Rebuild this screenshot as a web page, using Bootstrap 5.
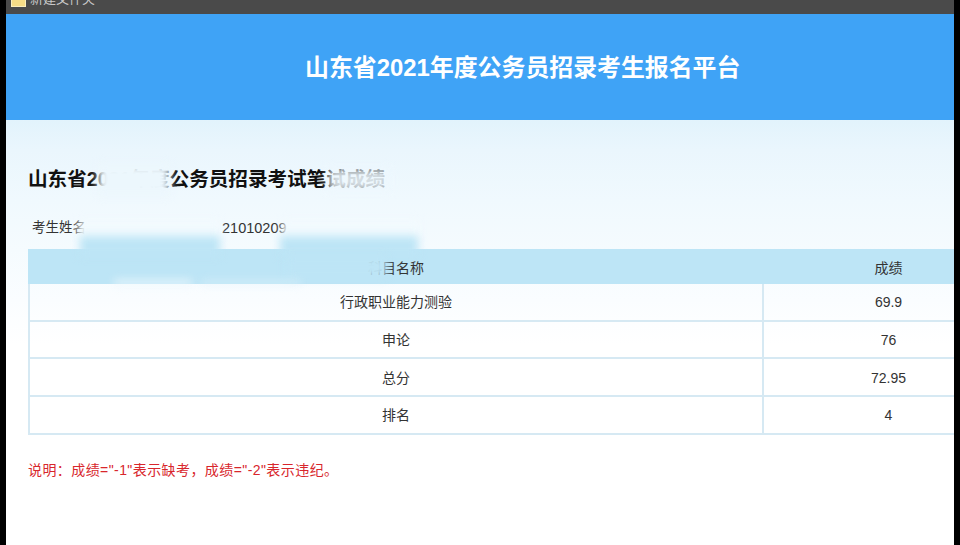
<!DOCTYPE html>
<html lang="zh">
<head>
<meta charset="utf-8">
<title>山东省2021年度公务员招录考生报名平台</title>
<link href="https://cdn.jsdelivr.net/npm/bootstrap@5.3.0/dist/css/bootstrap.min.css" rel="stylesheet">
<style>
html, body { height: 100%; }
body { background: #000; font-family: "Liberation Sans", "Noto Sans CJK SC", sans-serif; color: #333; font-size: 14px; }
.frame { margin: 0 6px; height: 545px; background: #fff; overflow: hidden; position: relative; }
.tabbar { height: 14px; background: #4a4a4a; color: #c9c9c9; font-size: 13px; line-height: 18px; overflow: hidden; padding-left: 5px; }
.tabinner { margin-top: -10px; gap: 4px; }
.foldericon { width: 15px; height: 15px; background: #f6dc86; margin-top: 2px; flex: none; border: 1px solid #fbeebc; }
.banner { height: 106px; background: #3fa3f6; color: #fff; font-size: 23.9px; font-weight: 700; padding-left: 299px; line-height: 108px; }
.bodyzone { height: 320px; padding: 44px 0 0 22px; background: linear-gradient(#e2f3fc 0, #eaf6fd 30px, #f0f9fe 80px, #f5fbfe 130px, #fafdff 180px, #fff 225px); position: relative; }
.exam-title { font-size: 19.6px; font-weight: 700; color: #111; margin: 0; line-height: 30px; white-space: nowrap; }
.inforow { margin-top: 24px; height: 31px; padding-left: 4px; font-size: 13.5px; line-height: 20px; }
.infoname { width: 190px; }
.infonum { font-size: 14.5px; }
.scoretable { width: 987px; max-width: none; margin: 0; table-layout: fixed; border-collapse: collapse; }
.scoretable th, .scoretable td { background: transparent; box-shadow: none; border: 2px solid #d6e9f3; color: #333; text-align: center; vertical-align: middle; padding: 2px 0 0; font-weight: 400; font-size: 14px; }
.scoretable thead th { background: #bde5f6; border-color: #bde5f6; height: 33px; padding-top: 3px; }
.scoretable tbody td { height: 37.7px; }
.col-sub { width: 734px; }
.note { color: #d8262c; margin: 25px 0 0; font-size: 14px; line-height: 20px; white-space: nowrap; letter-spacing: .42px; }
.smear { position: absolute; filter: blur(4px); }
.sm-a { left: 92px; top: 44px; width: 72px; height: 32px; background: #ecf7fd; }
.sm-b { left: 322px; top: 48px; width: 62px; height: 24px; background: #eef8fe; opacity: .88; }
.sm-c { left: 72px; top: 100px; width: 142px; height: 22px; background: #f2fafe; }
.sm-d { left: 276px; top: 100px; width: 137px; height: 22px; background: #f2fafe; }
.sm-e { left: 74px; top: 116px; width: 140px; height: 20px; background: #bde5f6; }
.sm-f { left: 274px; top: 116px; width: 138px; height: 20px; background: #bde5f6; }
.sm-g { left: 280px; top: 136px; width: 101px; height: 22px; background: #bde5f6; }
.sm-h { left: 108px; top: 160px; width: 78px; height: 5px; background: #eef8fd; }
.sm-i { left: 195px; top: 161px; width: 100px; height: 3px; background: #e2f3fb; }
</style>
</head>
<body>
<div class="frame">
  <div class="tabbar"><div class="tabinner d-flex"><span class="foldericon"></span><span>新建文件夹</span></div></div>
  <div class="banner">山东省2021年度公务员招录考生报名平台</div>
  <div class="bodyzone">
    <h1 class="exam-title">山东省2021年度公务员招录考试笔试成绩</h1>
    <div class="inforow d-flex"><span class="infoname">考生姓名</span><span class="infonum">21010209</span></div>
    <table class="table scoretable">
      <thead><tr><th class="col-sub">科目名称</th><th>成绩</th></tr></thead>
      <tbody>
        <tr><td>行政职业能力测验</td><td>69.9</td></tr>
        <tr><td>申论</td><td>76</td></tr>
        <tr><td>总分</td><td>72.95</td></tr>
        <tr><td>排名</td><td>4</td></tr>
      </tbody>
    </table>
    <p class="note">说明：成绩="-1"表示缺考，成绩="-2"表示违纪。</p>
    <div class="smear sm-a"></div>
    <div class="smear sm-b"></div>
    <div class="smear sm-c"></div>
    <div class="smear sm-d"></div>
    <div class="smear sm-e"></div>
    <div class="smear sm-f"></div>
    <div class="smear sm-g"></div>
    <div class="smear sm-h"></div>
    <div class="smear sm-i"></div>
  </div>
</div>
<script src="https://cdn.jsdelivr.net/npm/bootstrap@5.3.0/dist/js/bootstrap.bundle.min.js"></script>
</body>
</html>
